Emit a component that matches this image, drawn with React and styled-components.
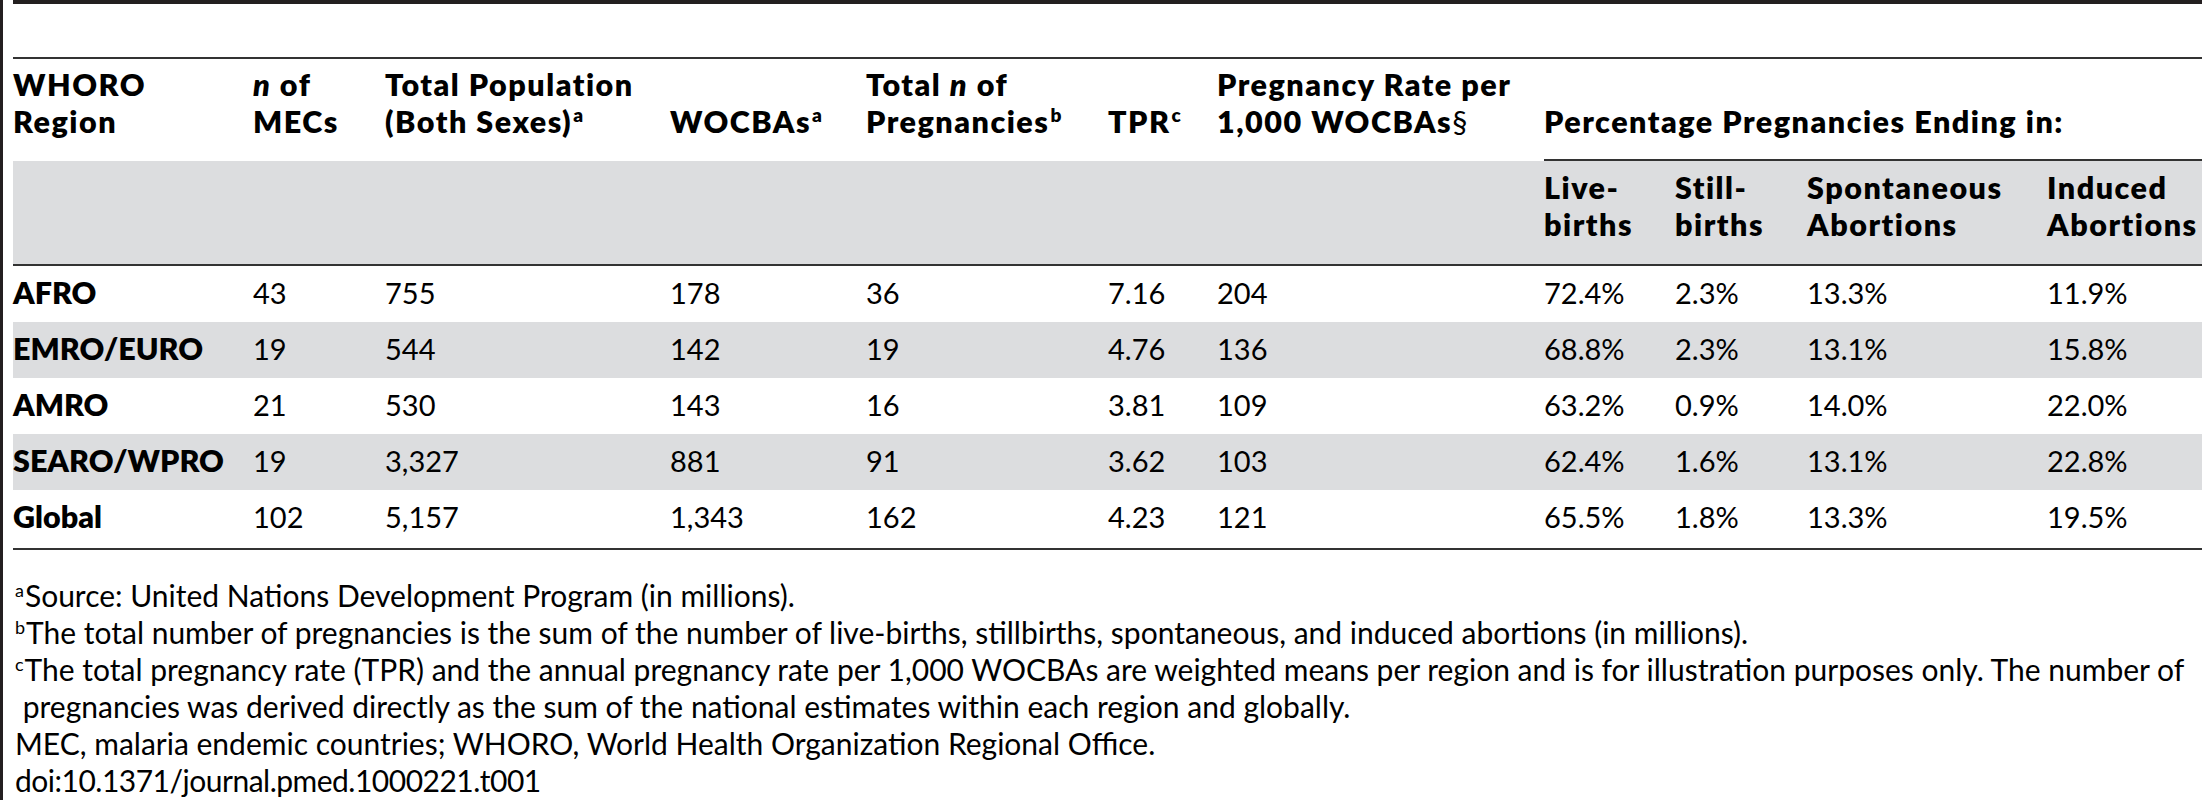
import React from "react";
import styled, { createGlobalStyle } from "styled-components";

const GlobalStyle = createGlobalStyle`
  html, body { margin: 0; padding: 0; background: #fff; }
  body {
    font-family: Lato, "Open Sans", "Noto Sans", sans-serif;
    color: #000;
  }
`;

const Page = styled.div`
  box-sizing: border-box;
  width: 2202px;
  height: 800px;
  border-left: 3px solid #231f20;
  padding-left: 10px;
`;

const TopBar = styled.div`
  height: 4px;
  background: #231f20;
`;

const Table = styled.table`
  margin-top: 53px;
  width: 2189px;
  table-layout: fixed;
  border-collapse: separate;
  border-spacing: 0;
`;

const Col = styled.col`
  width: ${(p) => p.$w}px;
`;

const HeadRow = styled.tr`
  background: ${(p) => (p.$shade ? "#dcdddf" : "#fff")};
`;

const HeadCell = styled.th`
  padding: ${(p) => (p.$sub ? "8px 0 21px" : "7px 0 19px")};
  text-align: left;
  vertical-align: bottom;
  font-weight: 800;
  font-size: 30.5px;
  line-height: 37px;
  letter-spacing: 1.5px;
  white-space: nowrap;
  border-top: ${(p) => (p.$sub ? "none" : "2px solid #333")};
  border-bottom: 2px solid ${(p) => (p.$rule ? "#333" : "transparent")};
`;

const Row = styled.tr`
  background: ${(p) => (p.$shade ? "#dcdddf" : "#fff")};
`;

const Cell = styled.td`
  padding: ${(p) => (p.$last ? "8px 0 13px" : "8px 0 11px")};
  font-size: ${(p) => (p.$label ? "30.5px" : "29px")};
  font-weight: ${(p) => (p.$label ? 800 : 400)};
  line-height: 37px;
  vertical-align: baseline;
  white-space: nowrap;
  border-bottom: ${(p) => (p.$last ? "2px solid #333" : "none")};
`;

const Ital = styled.i`
  font-style: italic;
`;

const HeadSup = styled.sup`
  font-size: 19px;
  font-weight: 800;
  letter-spacing: 0;
  line-height: 0;
  vertical-align: 11px;
  margin-left: 1px;
`;

const Light = styled.span`
  font-weight: 400;
`;

const Notes = styled.div`
  margin: 27px 0 0 2px;
  font-size: 30px;
  line-height: 37px;
  white-space: nowrap;
`;

const Note = styled.p`
  margin: 0;
  letter-spacing: ${(p) => (p.$tight ? "-0.5px" : "0")};
`;

const NoteMark = styled.sup`
  font-size: 18px;
  line-height: 0;
  vertical-align: 10px;
  margin-right: 1px;
`;

const widths = [240, 132, 285, 196, 242, 109, 327, 131, 132, 240, 155];

const rows = [
  ["AFRO", "43", "755", "178", "36", "7.16", "204", "72.4%", "2.3%", "13.3%", "11.9%"],
  ["EMRO/EURO", "19", "544", "142", "19", "4.76", "136", "68.8%", "2.3%", "13.1%", "15.8%"],
  ["AMRO", "21", "530", "143", "16", "3.81", "109", "63.2%", "0.9%", "14.0%", "22.0%"],
  ["SEARO/WPRO", "19", "3,327", "881", "91", "3.62", "103", "62.4%", "1.6%", "13.1%", "22.8%"],
  ["Global", "102", "5,157", "1,343", "162", "4.23", "121", "65.5%", "1.8%", "13.3%", "19.5%"],
];

export default function App() {
  return (
    <>
      <GlobalStyle />
      <Page>
        <TopBar />
        <Table>
          <colgroup>
            {widths.map((w, i) => (
              <Col key={i} $w={w} />
            ))}
          </colgroup>
          <thead>
            <HeadRow>
              <HeadCell>
                WHORO
                <br />
                Region
              </HeadCell>
              <HeadCell>
                <Ital>n</Ital> of
                <br />
                MECs
              </HeadCell>
              <HeadCell>
                Total Population
                <br />
                (Both Sexes)<HeadSup>a</HeadSup>
              </HeadCell>
              <HeadCell>
                WOCBAs<HeadSup>a</HeadSup>
              </HeadCell>
              <HeadCell>
                Total <Ital>n</Ital> of
                <br />
                Pregnancies<HeadSup>b</HeadSup>
              </HeadCell>
              <HeadCell>
                TPR<HeadSup>c</HeadSup>
              </HeadCell>
              <HeadCell>
                Pregnancy Rate per
                <br />
                1,000 WOCBAs<Light>§</Light>
              </HeadCell>
              <HeadCell colSpan={4} $rule>
                Percentage Pregnancies Ending in:
              </HeadCell>
            </HeadRow>
            <HeadRow $shade>
              {Array.from({ length: 7 }).map((_, i) => (
                <HeadCell key={i} $sub $rule />
              ))}
              <HeadCell $sub $rule>
                Live-
                <br />
                births
              </HeadCell>
              <HeadCell $sub $rule>
                Still-
                <br />
                births
              </HeadCell>
              <HeadCell $sub $rule>
                Spontaneous
                <br />
                Abortions
              </HeadCell>
              <HeadCell $sub $rule>
                Induced
                <br />
                Abortions
              </HeadCell>
            </HeadRow>
          </thead>
          <tbody>
            {rows.map((r, ri) => (
              <Row key={r[0]} $shade={ri % 2 === 1}>
                {r.map((v, ci) => (
                  <Cell key={ci} $label={ci === 0} $last={ri === rows.length - 1}>
                    {v}
                  </Cell>
                ))}
              </Row>
            ))}
          </tbody>
        </Table>
        <Notes>
          <Note>
            <NoteMark>a</NoteMark>Source: United Nations Development Program (in millions).
          </Note>
          <Note>
            <NoteMark>b</NoteMark>The total number of pregnancies is the sum of the number of
            live-births, stillbirths, spontaneous, and induced abortions (in millions).
          </Note>
          <Note>
            <NoteMark>c</NoteMark>The total pregnancy rate (TPR) and the annual pregnancy rate
            per 1,000 WOCBAs are weighted means per region and is for illustration purposes only.
            The number of
            <br />
            {"\u00a0"}pregnancies was derived directly as the sum of the national estimates within
            each region and globally.
          </Note>
          <Note>MEC, malaria endemic countries; WHORO, World Health Organization Regional Office.</Note>
          <Note $tight>doi:10.1371/journal.pmed.1000221.t001</Note>
        </Notes>
      </Page>
    </>
  );
}
